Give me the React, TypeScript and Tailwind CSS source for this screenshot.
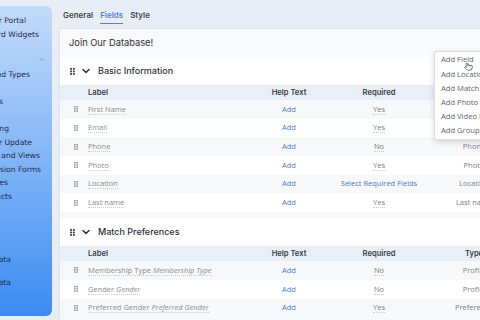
import React from 'react';
import { ChevronDown, ChevronUp, Pointer } from 'lucide-react';

type Row = { label: string; italic?: string; required: string; link?: boolean; type: string };

const basicRows: Row[] = [
  { label: 'First Name', required: 'Yes', type: 'First Name' },
  { label: 'Email', required: 'Yes', type: 'Email' },
  { label: 'Phone', required: 'No', type: 'Phone' },
  { label: 'Photo', required: 'Yes', type: 'Photo' },
  { label: 'Location', required: 'Select Required Fields', link: true, type: 'Location' },
  { label: 'Last name', required: 'Yes', type: 'Last name' },
];

const matchRows: Row[] = [
  { label: 'Membership Type', italic: 'Membership Type', required: 'No', type: 'Profile' },
  { label: 'Gender', italic: 'Gender', required: 'No', type: 'Profile' },
  { label: 'Preferred Gender', italic: 'Preferred Gender', required: 'Yes', type: 'Preference' },
];

// sidebar is scrolled sideways, so labels are right-aligned to where their visible part ends
const navItems = [
  { label: 'Member Portal', w: 'w-[26px]' },
  { label: 'Dashboard Widgets', w: 'w-[39px]' },
  { label: 'Home', w: 'w-0' },
  { label: 'Setup', w: 'w-0', caret: true },
  { label: 'Fields and Types', w: 'w-[30px]' },
  { label: 'Tags', w: 'w-0' },
  { label: 'Questions', w: 'w-[3px]' },
  { label: 'Plans', w: 'w-0' },
  { label: 'Onboarding', w: 'w-[9px]' },
  { label: 'Member Update', w: 'w-[32px]' },
  { label: 'Template and Views', w: 'w-[40px]' },
  { label: 'Submission Forms', w: 'w-[41px]' },
  { label: 'Packages', w: 'w-[8px]' },
  { label: 'Products', w: 'w-[12px]' },
];

const Dots = ({ dark }: { dark?: boolean }) => (
  <svg width={dark ? 5 : 4} height={dark ? 7 : 6} viewBox="0 0 4 6" className="shrink-0">
    {[0, 1].map((c) =>
      [0, 1, 2].map((r) => (
        <rect key={`${c}-${r}`} x={c * 2.4} y={r * 2.2} width="1.5" height="1.5" fill={dark ? '#2f3340' : '#8a8f99'} />
      ))
    )}
  </svg>
);

const Table = ({ rows }: { rows: Row[] }) => (
  <div className="font-['Open_Sans',sans-serif] text-[7.5px]">
    <div className="flex h-[15px] items-center bg-[#e8eff9] font-['Inter',sans-serif] text-[7.6px] font-semibold text-[#3a3d44]">
      <div className="w-[28px]" />
      <div className="w-[161px]">Label</div>
      <div className="w-[80px] text-center">Help Text</div>
      <div className="w-[100px] text-center">Required</div>
      <div className="w-[90px] text-center">Type</div>
    </div>
    {rows.map((r, i) => (
      <div key={r.label} className={`flex h-[18.7px] items-center ${i % 2 === 0 ? 'bg-[#f7f8fa]' : 'bg-white'}`}>
        <div className="flex w-[28px] justify-center pl-[4px]">
          <Dots />
        </div>
        <div className="w-[161px] text-[#8a8d93]">
          <span className="border-b border-dotted border-[#c9ccd2]">
            {r.label}
            {r.italic && <i> {r.italic}</i>}
          </span>
        </div>
        <div className="w-[80px] text-center text-[#4a7cc4]">Add</div>
        <div className="w-[100px] text-center">
          {r.link ? (
            <span className="text-[#4a7cc4]">{r.required}</span>
          ) : (
            <span className="border-b border-dotted border-[#c9ccd2] text-[#7d8087]">{r.required}</span>
          )}
        </div>
        <div className="w-[90px] whitespace-nowrap text-center text-[#7d8087]">{r.type}</div>
      </div>
    ))}
  </div>
);

const SectionHead = ({ title }: { title: string }) => (
  <div className="flex h-[28px] items-center pl-[10px]">
    <Dots dark />
    <ChevronDown size={12} strokeWidth={3} className="ml-[5px] text-[#2f3340]" />
    <span className="ml-[6px] font-['Inter',sans-serif] text-[9px] font-medium text-[#2d3038]">{title}</span>
  </div>
);

export default function App() {
  return (
    <div className="relative flex h-[320px] w-[480px] overflow-hidden bg-[#e9eef6]">
      {/* Sidebar */}
      <aside className="mt-[6px] h-[310px] w-[52px] shrink-0 overflow-hidden rounded-r-[6px] bg-gradient-to-b from-[#c4dbfa] via-[#80b4f6] to-[#3a8bf2] pt-[8px] font-['DejaVu_Sans',sans-serif] text-[7.6px] leading-[13.5px] text-[#1d2b4f]">
        {navItems.map((n) => (
          <div key={n.label} className="flex h-[13.5px] items-center">
            <div className={`flex shrink-0 justify-end whitespace-nowrap ${n.w}`}>{n.label}</div>
            {n.caret && <ChevronUp size={7} strokeWidth={2} className="ml-[38px] -mt-[3px] text-[#5d6f91]" />}
          </div>
        ))}
        <div className="mt-[50px] flex h-[23px] items-start">
          <div className="flex w-[11px] shrink-0 justify-end whitespace-nowrap">Import Data</div>
        </div>
        <div className="flex h-[13.5px]">
          <div className="flex w-[11px] shrink-0 justify-end whitespace-nowrap">Export Data</div>
        </div>
      </aside>

      {/* Main */}
      <main className="ml-[7px] flex w-[520px] shrink-0 flex-col">
        <nav className="flex h-[28px] items-start gap-[7px] pl-[4px] pt-[9px] font-['Inter',sans-serif] text-[8px] font-semibold text-[#454851]">
          <span>General</span>
          <span className="border-b-[1.5px] border-[#4a86d8] pb-[2px] text-[#4a86d8]">Fields</span>
          <span>Style</span>
        </nav>

        <div className="flex-1 border-l border-t border-[#dfe4ec] bg-[#f5f7fa]">
          <div className="flex h-[28px] items-center bg-[#f9fafc] pl-[9px] font-['Inter',sans-serif] text-[9.3px] text-[#2d3038]">
            Join Our Database!
          </div>
          <section className="bg-white">
            <SectionHead title="Basic Information" />
            <Table rows={basicRows} />
          </section>
          <section className="mt-[6px] bg-white">
            <SectionHead title="Match Preferences" />
            <Table rows={matchRows} />
          </section>
        </div>
      </main>

      {/* Add menu */}
      <div className="absolute left-[434px] top-[51px] w-[70px] rounded-[3px] border border-[#dcdfe4] bg-white py-[1px] font-['Open_Sans',sans-serif] text-[7.6px] text-[#5b5f66] shadow-[0_2px_6px_rgba(0,0,0,0.15)]">
        {['Add Field', 'Add Location', 'Add Match Field', 'Add Photo Field', 'Add Video Field', 'Add Group'].map((t) => (
          <div key={t} className="flex h-[14.2px] items-center whitespace-nowrap pl-[6px]">{t}</div>
        ))}
        <Pointer size={9} strokeWidth={1.6} className="absolute left-[29px] top-[10px] fill-white text-[#333]" />
      </div>
    </div>
  );
}
